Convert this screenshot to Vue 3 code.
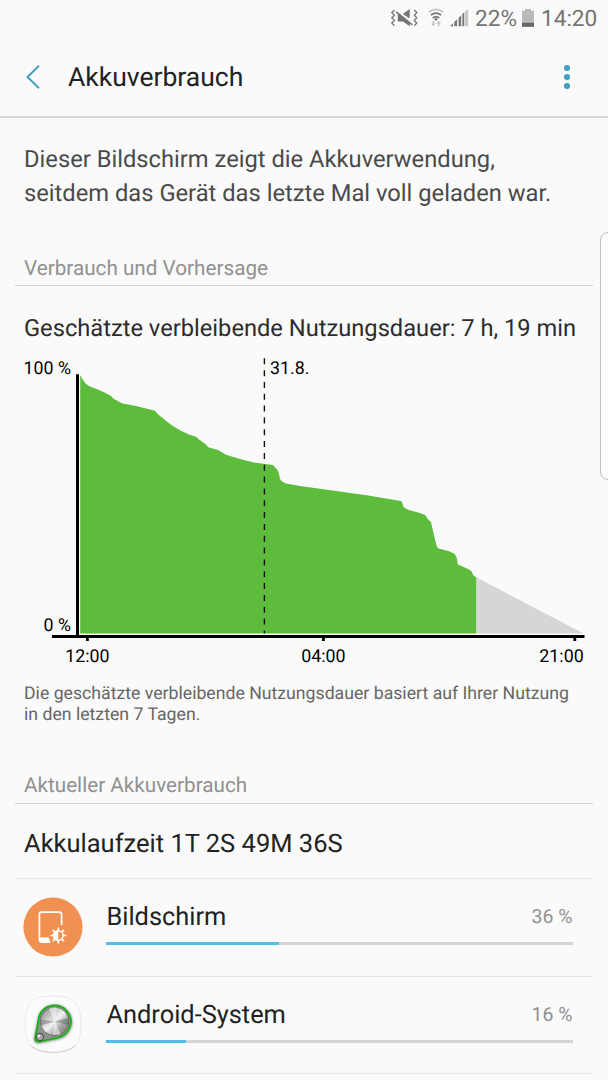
<template>
  <div class="screen">
    <div class="status-bar">
      <svg class="status-icons" width="82" height="36" viewBox="388 0 82 36">
        <!-- vibrate / muted -->
        <g fill="none" stroke="#757575" stroke-width="1.3">
          <path d="M394.5 10 391.8 12.6 394.4 15.2 391.8 17.8 394.4 20.4 391.8 23 394.5 25.8" />
          <path d="M414.3 10 416.8 12.6 414.3 15.2 416.8 17.8 414.3 20.4 416.8 23 414.3 25.8" />
        </g>
        <path fill="#757575" d="M402.8 14 409.7 9v9.6zM397.8 14h1.6l10.3 8v4.2L403 21.6h-5.2z" />
        <path stroke="#757575" stroke-width="1.6" d="M396.2 11.8 412.3 24.8" />
        <!-- wifi -->
        <g fill="none" stroke-width="1.7">
          <path stroke="#c4c4c4" d="M428.8 12.2q7.2-5.8 14.4 0" />
          <path stroke="#757575" d="M430.9 15.2q5.1-4.2 10.2 0" />
          <path stroke="#757575" d="M432.8 18q3.2-2.8 6.4 0" />
        </g>
        <circle cx="436" cy="19.3" r="1.3" fill="#757575" />
        <path fill="#c4c4c4" d="M432.5 20.7h1.6v2.8h1.7l-2.5 2.7-2.5-2.7h1.7zM437.8 26.2h1.6v-2.8h1.7l-2.5-2.7-2.5 2.7h1.7z" />
        <!-- signal -->
        <path fill="#757575" d="M450 26.3l3-3v3zM454.3 26.3v-4.2l2.8-2.8v7zM458.6 26.3v-8.4l2.6-2.6v11zM462.4 26.3V14.1l1.8-1.8v14z" />
        <path fill="#c8c8c8" d="M464.8 26.3V11.8l3.4-3v17.5z" />
      </svg>
      <span class="percent">22%</span>
      <svg class="battery" width="12" height="18" viewBox="0 0 12 18">
        <path fill="#b9b9b9" d="M3 0h6v1.7h3V14H0V1.7h3z" />
        <path fill="#666" d="M0 13.8h12v4H0z" />
      </svg>
      <span class="clock">14:20</span>
    </div>

    <header class="app-bar">
      <svg class="back" width="16" height="26" viewBox="0 0 16 26">
        <path d="M14 1.8 2.5 13 14 24.2" fill="none" stroke="#3f9fc4" stroke-width="1.9" />
      </svg>
      <h1>Akkuverbrauch</h1>
      <div class="more"><i v-for="n in 3" :key="n"></i></div>
    </header>

    <p class="intro">Dieser Bildschirm zeigt die Akkuverwendung,<br />seitdem das Gerät das letzte Mal voll geladen war.</p>

    <h2 class="section">Verbrauch und Vorhersage</h2>
    <div class="estimate">Geschätzte verbleibende Nutzungsdauer: 7 h, 19 min</div>

    <svg class="chart" width="608" height="318" viewBox="0 350 608 318">
      <path fill="#fff" d="M79 374.5h1.2V633.5H584v1.6H79z" />
      <path fill="#d6d6d6" d="M476.2 577.3 583.6 633.5H476.2z" />
      <polygon fill="#5dbc3c" :points="area" />
      <path d="M264.4 358.3V633.6" stroke="#111" stroke-width="1.4" stroke-dasharray="6 5.83" />
      <path fill="#000" d="M76 374.3h3V635h-3zM52 635h532.5v3H52z" />
      <rect v-for="t in ticks" :key="t.label" :x="t.x - 1.4" y="637" width="2.8" height="4" />
      <text x="71" y="374" text-anchor="end">100 %</text>
      <text x="71" y="631" text-anchor="end">0 %</text>
      <text x="270" y="374">31.8.</text>
      <text v-for="t in ticks" :key="t.x" :x="t.textX" y="661.5" text-anchor="middle">{{ t.label }}</text>
    </svg>

    <p class="note">Die geschätzte verbleibende Nutzungsdauer basiert auf Ihrer Nutzung<br />in den letzten 7 Tagen.</p>

    <h2 class="section current">Aktueller Akkuverbrauch</h2>
    <div class="runtime">Akkulaufzeit 1T 2S 49M 36S</div>

    <ul class="apps">
      <li v-for="app in apps" :key="app.name">
        <svg v-if="app.icon === 'display'" class="icon" width="60" height="60" viewBox="0 0 60 60">
          <circle cx="30" cy="30" r="29.6" fill="#f09152" />
          <path d="M38.6 28V17.5a2.4 2.4 0 0 0-2.4-2.4H18.8a2.4 2.4 0 0 0-2.4 2.4v25a2.4 2.4 0 0 0 2.4 2.4H27" fill="none" stroke="#fff" stroke-width="1.7" />
          <path d="M16 40.6h9.5l2.2 5.1h-8.9a2.8 2.8 0 0 1-2.8-2.8z" fill="#fff" />
          <path d="M35.3 30.5v16M27.3 38.5h16M29.7 32.9l11.2 11.2M40.9 32.9 29.7 44.1" stroke="#fff" stroke-width="1.6" />
          <circle cx="35.3" cy="38.5" r="5.5" fill="#fff" />
          <path d="M35.3 34.5a4 4 0 0 1 0 8z" fill="#f09152" />
        </svg>
        <svg v-else class="icon" width="60" height="60" viewBox="0 0 60 60">
          <defs>
            <linearGradient id="knob" x1="0" y1="0" x2="1" y2="1">
              <stop offset="0" stop-color="#777" />
              <stop offset=".3" stop-color="#c4c4c4" />
              <stop offset=".5" stop-color="#f2f2f2" />
              <stop offset=".7" stop-color="#a5a5a5" />
              <stop offset="1" stop-color="#6c6c6c" />
            </linearGradient>
            <filter id="soft" x="-20%" y="-20%" width="140%" height="140%">
              <feGaussianBlur stdDeviation="1" />
            </filter>
          </defs>
          <path d="M30 1C50 1 58 7 58 29S50 57.6 30 57.6 2 51 2 29 10 1 30 1z" fill="#fbfbfb" stroke="#e4e4e4" stroke-width=".8" />
          <path d="M7.5 50.5Q16 57.4 30 57.4T52.5 50.5" fill="none" stroke="#c9c9c9" stroke-width=".9" />
          <path d="M12 43 16.3 22A16.4 16.4 0 1 1 35 43.4L16 47.5Q11.5 47.5 12 43z" fill="#555" opacity=".6" stroke="#555" stroke-width="2.5" filter="url(#soft)" />
          <path d="M12.3 43 16.2 21A16.3 16.3 0 1 1 35 42.6L16 46.8Q11.8 47 12.3 43z" fill="#909090" stroke="#16b312" stroke-width="1.8" />
          <circle cx="31.6" cy="26.4" r="14.3" fill="url(#knob)" stroke="#606060" stroke-width=".8" />
          <path d="M31.6 26.4 26 13.4a14 14 0 0 1 8-.8zM31.6 26.4l6.2 12.5a14 14 0 0 1-8 1z" fill="#fff" opacity=".45" />
          <path d="M31.6 26.4 17.8 24.5v6zM31.6 26.4l13.8-3.5v7z" fill="#444" opacity=".35" />
          <circle cx="16.9" cy="42" r="3.7" fill="#aaa" stroke="#444" stroke-width="1" />
          <circle cx="15.8" cy="41" r="1.3" fill="#eee" />
        </svg>
        <div class="usage">
          <div class="line">
            <span class="name">{{ app.name }}</span>
            <span class="value">{{ app.percent }} %</span>
          </div>
          <div class="bar"><div class="fill" :style="{ width: app.fill + '%' }"></div></div>
        </div>
      </li>
    </ul>

    <div class="edge-handle"></div>
  </div>
</template>

<script setup>
const ticks = [
  { label: "12:00", x: 87.4, textX: 87.4 },
  { label: "04:00", x: 323.4, textX: 323.3 },
  { label: "21:00", x: 574.8, textX: 561.5 },
];

// battery level over time, in chart coordinates
const levels = [
  [80.2, 375], [83, 380], [86, 384], [90, 386.5], [99, 390], [104, 392.2],
  [111, 396], [114, 399], [122.5, 403.5], [136, 406], [155, 410.8],
  [158, 414.3], [165, 420], [172, 425.6], [180, 430.3], [189, 434.5],
  [196.5, 437], [199, 439.5], [206, 444.5], [208.3, 447.2], [218, 450],
  [226.5, 455], [240, 459], [254, 462.5], [273, 465], [277.5, 470],
  [279, 474], [280, 479], [282, 481.5], [286, 483.5], [300, 486],
  [365, 495], [401, 501], [402, 502], [403.5, 507], [408, 509.8],
  [420, 513], [425.5, 515.3], [428, 519.5], [431, 522], [432.5, 529],
  [436.5, 545.5], [438, 548.3], [449, 551.3], [454.5, 553.7],
  [457, 558.5], [457.7, 564.2], [469, 569.5], [472, 571.7], [473, 575],
  [476.2, 577.5],
];
const area = [...levels, [476.2, 633.5], [80.2, 633.5]].join(" ");

const apps = [
  { name: "Bildschirm", percent: 36, fill: 37, icon: "display" },
  { name: "Android-System", percent: 16, fill: 17, icon: "system" },
];
</script>

<style>
body {
  background: #fafafa;
}
</style>

<style scoped>
.screen {
  position: relative;
  width: 608px;
  height: 1080px;
  overflow: hidden;
  background: #fafafa;
  color: #222;
  font-family: Roboto, sans-serif;
  text-rendering: geometricPrecision;
}
h1,
h2,
p,
ul {
  margin: 0;
  padding: 0;
  font-weight: 400;
}
.status-bar {
  display: flex;
  align-items: flex-start;
  height: 36px;
  padding-left: 388px;
  color: #757575;
  font-size: 22.6px;
  line-height: 38px;
  white-space: nowrap;
}
.status-bar svg {
  flex: none;
}
.percent {
  width: 46px;
  margin-left: 5px;
}
.battery {
  margin-top: 9px;
  margin-left: 1px;
}
.clock {
  margin-left: 7px;
}
.app-bar {
  display: flex;
  align-items: center;
  height: 78px;
  padding: 2px 38.5px 0 25px;
  border-bottom: 2px solid #d6d6d6;
}
.app-bar h1 {
  flex: 1;
  margin-left: 27px;
  padding-top: 2px;
  font-size: 26.5px;
  line-height: 36px;
}
.more {
  display: flex;
  flex-direction: column;
  gap: 3.4px;
}
.more i {
  width: 5.6px;
  height: 5.6px;
  border-radius: 50%;
  background: #3f9fc4;
}
.intro {
  padding: 24px 24px 0;
  color: #4a4a4a;
  font-size: 23.72px;
  line-height: 34px;
  white-space: nowrap;
}
.section {
  height: 34px;
  margin: 41px 15px 0;
  padding-left: 9px;
  border-bottom: 1.5px solid #d4d4d4;
  color: #919191;
  font-size: 20.7px;
  line-height: 36px;
}
.estimate {
  height: 64px;
  padding: 0 24px;
  color: #2c2c2c;
  font-size: 23.68px;
  line-height: 84px;
  white-space: nowrap;
}
.chart {
  display: block;
}
.chart text {
  fill: #000;
  font-size: 17.8px;
}
.note {
  padding: 16px 24px 0;
  color: #666;
  font-size: 17.68px;
  line-height: 21px;
  white-space: nowrap;
}
.current {
  height: 35px;
  margin-top: 42px;
}
.runtime {
  height: 74px;
  margin: 0 15px;
  padding-left: 9px;
  border-bottom: 1px solid #e6e6e6;
  font-size: 25.5px;
  line-height: 80px;
}
.apps {
  list-style: none;
}
.apps li {
  display: flex;
  height: 96.5px;
  margin: 0 15px;
  border-bottom: 1px solid #e6e6e6;
}
.icon {
  flex: none;
  margin: 18px 0 0 8px;
}
.usage {
  flex: 1;
  padding: 20px 20.5px 0 23.4px;
}
.line {
  display: flex;
  justify-content: space-between;
  height: 43px;
  line-height: 36px;
}
.name {
  font-size: 25.4px;
  line-height: 37px;
}
.value {
  color: #919191;
  font-size: 19.5px;
  line-height: 35px;
}
.bar {
  height: 3px;
  background: #d4d4d4;
}
.fill {
  height: 3px;
  background: #50bfe6;
}
.edge-handle {
  position: absolute;
  top: 232px;
  left: 600px;
  width: 20px;
  height: 246px;
  border: 1px solid #bdbdbd;
  border-radius: 8px;
  background: #fcfcfc;
}
</style>
